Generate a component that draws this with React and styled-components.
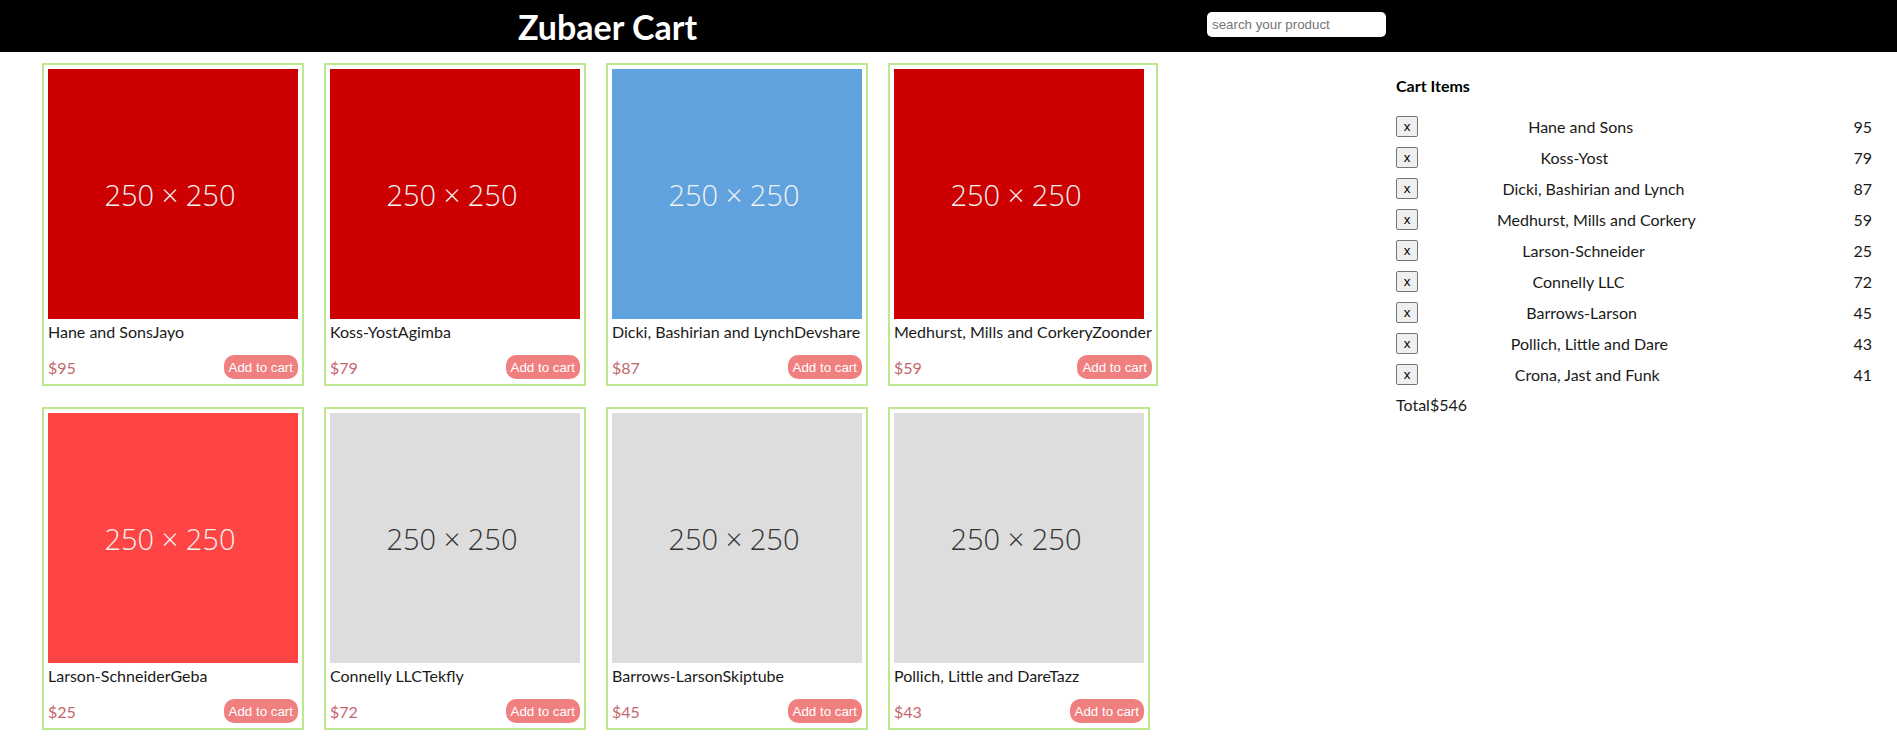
import styled, { createGlobalStyle } from "styled-components";

const GlobalStyle = createGlobalStyle`
  body {
    margin: 0;
    font-family: Lato, "Noto Sans", sans-serif;
    color: #1a1a1a;
    background: #ffffff;
  }
`;

const Header = styled.header`
  height: 52px;
  background-color: #000000;
  display: flex;
  align-items: center;
`;
const Brand = styled.h1`
  box-sizing: border-box;
  width: 1207px;
  padding-left: 8px;
  margin: 0;
  text-align: center;
  color: #ffffff;
  font-size: 34px;
  font-weight: 700;
`;
const Search = styled.input`
  box-sizing: border-box;
  width: 179px;
  height: 25px;
  margin-bottom: 3px;
  border: none;
  border-radius: 5px;
  padding: 1px 5px;
  font-family: "Liberation Sans", Arial, sans-serif;
  font-size: 13.333px;
  outline: none;
  &::placeholder {
    color: #757575;
  }
`;
const Page = styled.div`
  display: flex;
  align-items: flex-start;
`;
const Products = styled.main`
  flex: 1;
  display: flex;
  flex-wrap: wrap;
  align-content: flex-start;
  gap: 21px 20px;
  padding: 11px 0 0 42px;
`;
const Card = styled.div`
  border: 2px solid #bde88e;
  padding: 4px 4px 5px;
  display: flex;
  flex-direction: column;
  min-width: 250px;
`;
const Thumb = styled.div`
  box-sizing: border-box;
  width: 250px;
  height: 250px;
  padding-right: 6px;
  background-color: ${(p) => p.$bg};
  color: ${(p) => p.$ink};
  display: flex;
  align-items: center;
  justify-content: center;
  font-family: "Open Sans", Lato, sans-serif;
  font-weight: 300;
  font-size: 29px;
`;
const Title = styled.div`
  margin: 3px 0 14px;
  font-size: 16px;
  line-height: 19px;
  white-space: nowrap;
`;
const Bottom = styled.div`
  display: flex;
  justify-content: space-between;
  align-items: center;
`;
const Price = styled.span`
  color: #c4676d;
  font-size: 16px;
`;
const AddBtn = styled.button`
  background-color: #f08080;
  color: #ffffff;
  border: none;
  border-radius: 10px;
  height: 24px;
  padding: 0 5px;
  font-family: "Liberation Sans", Arial, sans-serif;
  font-size: 13.333px;
`;
const Sidebar = styled.aside`
  width: 476px;
  margin-right: 25px;
`;
const CartTitle = styled.h4`
  margin: 24px 0 21px;
  font-size: 16px;
  line-height: 19px;
  font-weight: 700;
  color: #000000;
`;
const Row = styled.div`
  display: flex;
  justify-content: space-between;
  align-items: center;
  height: 21px;
  margin-bottom: 10px;
  font-size: 16px;
`;
const RemoveBtn = styled.button`
  box-sizing: border-box;
  width: 22px;
  height: 21px;
  padding: 0;
  background-color: #efefef;
  border: 1px solid #767676;
  border-radius: 2px;
  font-family: "Liberation Sans", Arial, sans-serif;
  font-size: 13.333px;
  color: #000000;
`;
const Total = styled.div`
  margin-top: 3px;
  font-size: 16px;
  line-height: 19px;
`;

const RED = { bg: "#cc0000", ink: "#f2f2f2" };
const BLUE = { bg: "#5fa2dd", ink: "#f2f2f2" };
const PINK = { bg: "#ff4444", ink: "#f2f2f2" };
const GREY = { bg: "#dddddd", ink: "#333333" };

const products = [
  { company: "Hane and Sons", name: "Jayo", price: 95, c: RED },
  { company: "Koss-Yost", name: "Agimba", price: 79, c: RED },
  { company: "Dicki, Bashirian and Lynch", name: "Devshare", price: 87, c: BLUE },
  { company: "Medhurst, Mills and Corkery", name: "Zoonder", price: 59, c: RED },
  { company: "Larson-Schneider", name: "Geba", price: 25, c: PINK },
  { company: "Connelly LLC", name: "Tekfly", price: 72, c: GREY },
  { company: "Barrows-Larson", name: "Skiptube", price: 45, c: GREY },
  { company: "Pollich, Little and Dare", name: "Tazz", price: 43, c: GREY },
  { company: "Crona, Jast and Funk", name: "Quatz", price: 41, c: BLUE },
  { company: "Wolff Group", name: "Yodel", price: 64, c: RED },
  { company: "Kuhn-Ryan", name: "Voomm", price: 33, c: GREY },
  { company: "Bode Inc", name: "Livetube", price: 18, c: PINK },
];

const cart = products.slice(0, 9);
const total = cart.reduce((s, p) => s + p.price, 0);

const App = () => {
  return (
    <div>
      <GlobalStyle />
      <Header>
        <Brand>Zubaer Cart</Brand>
        <Search placeholder="search your product" />
      </Header>
      <Page>
        <Products>
          {products.map((p) => (
            <Card key={p.company}>
              <Thumb $bg={p.c.bg} $ink={p.c.ink}>
                250 × 250
              </Thumb>
              <Title>
                {p.company}
                {p.name}
              </Title>
              <Bottom>
                <Price>${p.price}</Price>
                <AddBtn>Add to cart</AddBtn>
              </Bottom>
            </Card>
          ))}
        </Products>
        <Sidebar>
          <CartTitle>Cart Items</CartTitle>
          {cart.map((p) => (
            <Row key={p.company}>
              <RemoveBtn>x</RemoveBtn>
              <span>{p.company}</span>
              <span />
              <span>{p.price}</span>
            </Row>
          ))}
          <Total>Total${total}</Total>
        </Sidebar>
      </Page>
    </div>
  );
};
export default App;
